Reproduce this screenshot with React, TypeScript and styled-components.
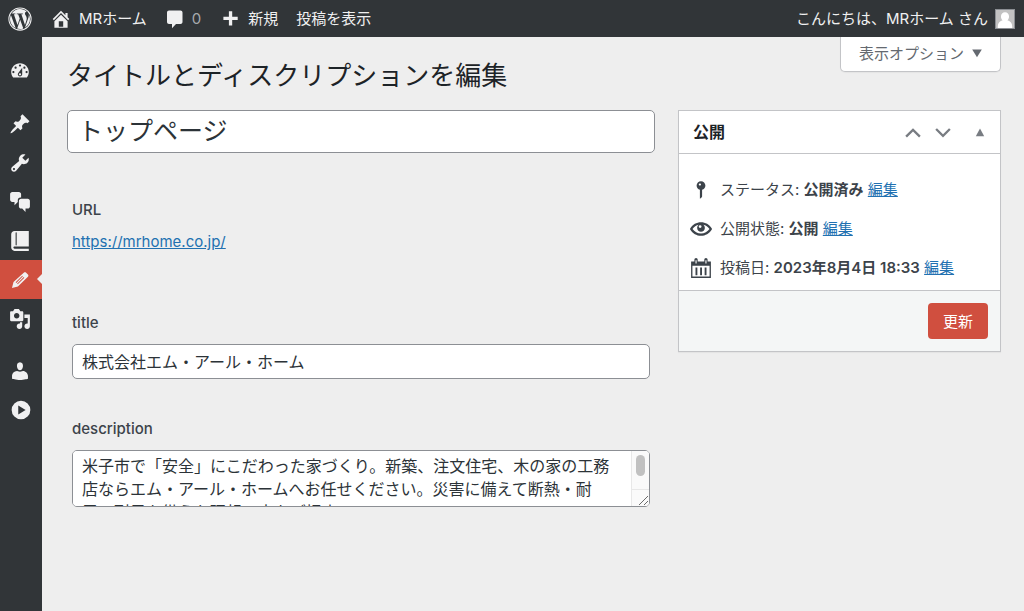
import React from "react";
import styled, { createGlobalStyle, css } from "styled-components";

const fontStack = `Inter, "Noto Sans CJK JP", sans-serif`;

const GlobalStyle = createGlobalStyle`
  *, *::before, *::after { box-sizing: border-box; }
  body {
    margin: 0;
    background: #eeeeee;
    color: #3c434a;
    font-family: ${fontStack};
    font-size: 15px;
    line-height: 20px;
  }
  h1, h2, p, ul { margin: 0; padding: 0; }
  ul { list-style: none; }
  button, input, textarea { font-family: inherit; }
`;

const Page = styled.div`
  display: flex;
  flex-direction: column;
  min-height: 100vh;
`;

const AdminBar = styled.header`
  display: flex;
  align-items: center;
  justify-content: space-between;
  height: 37px;
  padding: 0 9px 0 8px;
  background: #313538;
`;

const BarGroup = styled.nav`
  display: flex;
  align-items: center;
  gap: 18px;
`;

const BarLink = styled.a<{ $muted?: boolean }>`
  display: flex;
  align-items: center;
  gap: 7px;
  color: ${(p) => (p.$muted ? "#a7aaad" : "#f0f0f1")};
  text-decoration: none;
  white-space: nowrap;
`;

const Glyph = styled.svg<{ $size: number; $color?: string }>`
  display: block;
  flex: none;
  width: ${(p) => p.$size}px;
  height: ${(p) => p.$size}px;
  fill: ${(p) => p.$color ?? "#f0f0f1"};
  fill-rule: evenodd;
`;

const Avatar = styled(Glyph)`
  background: #c2c2c2;
  border: 1px solid #8c8f94;
`;

const Body = styled.div`
  display: flex;
  flex: 1;
`;

const SideMenu = styled.nav`
  display: flex;
  flex: none;
  flex-direction: column;
  width: 42px;
  padding-top: 14px;
  background: #313538;
`;

const MenuGroup = styled.ul`
  margin-bottom: 13px;
  &:first-child {
    margin-bottom: 14px;
  }
`;

const MenuLink = styled.a<{ $current?: boolean }>`
  position: relative;
  display: flex;
  align-items: center;
  height: 39px;
  padding-left: 9px;
  ${(p) =>
    p.$current &&
    css`
      background: #d04f3f;
      &::after {
        content: "";
        position: absolute;
        top: 14px;
        right: 0;
        border: 5px solid transparent;
        border-left-width: 0;
        border-right-color: #eeeeee;
      }
    `}
`;

const CollapseButton = styled.button`
  display: flex;
  align-items: center;
  width: 100%;
  height: 39px;
  padding: 0 0 0 10px;
  border: 0;
  background: none;
`;

const Content = styled.main`
  flex: 1;
  min-width: 0;
  padding: 0 23px 0 25px;
`;

const TopRow = styled.div`
  display: flex;
  align-items: flex-start;
  justify-content: space-between;
  height: 73px;
`;

const PageTitle = styled.h1`
  padding-top: 22px;
  color: #1d2327;
  font-size: 26px;
  font-weight: 400;
  line-height: 34px;
`;

const ScreenOptions = styled.button`
  display: flex;
  align-items: center;
  gap: 7px;
  height: 35px;
  padding: 0 17px 3px 18px;
  border: 1px solid #c3c4c7;
  border-top: 0;
  border-radius: 0 0 5px 5px;
  background: #ffffff;
  box-shadow: 0 1px 1px rgba(0, 0, 0, 0.04);
  color: #646970;
  font-size: 15px;
`;

const Columns = styled.div`
  display: grid;
  grid-template-columns: minmax(0, 1fr) 323px;
  align-items: start;
  gap: 23px;
`;

const Editor = styled.form`
  display: flex;
  flex-direction: column;
`;

const TitleInput = styled.input`
  width: 100%;
  height: 43px;
  padding: 0 10px 5px;
  border: 1px solid #8c8f94;
  border-radius: 5px;
  background: #ffffff;
  color: #2c3338;
  font-size: 25px;
`;

const Field = styled.div`
  display: flex;
  flex-direction: column;
  align-items: flex-start;
  gap: 11px;
  padding: 0 5px;
  margin-top: 40px;
`;

const UrlField = styled(Field)`
  gap: 12px;
  margin: 47px 0 21px;
`;

const FieldLabel = styled.label`
  font-weight: 500;
`;

const Link = styled.a`
  color: #2271b1;
  text-decoration: underline;
`;

const controlStyle = css`
  display: block;
  width: 100%;
  border: 1px solid #8c8f94;
  border-radius: 5px;
  background: #ffffff;
  color: #2c3338;
  font-size: 16px;
`;

const TextInput = styled.input`
  ${controlStyle}
  height: 35px;
  padding: 0 9px 2px;
`;

const TextAreaFrame = styled.div`
  position: relative;
  width: 100%;
`;

const TextArea = styled.textarea`
  ${controlStyle}
  height: 57px;
  padding: 4px 28px 0 9px;
  line-height: 23px;
  resize: none;
  scrollbar-width: none;
`;

const ScrollTrack = styled.div`
  position: absolute;
  top: 1px;
  right: 1px;
  bottom: 1px;
  display: flex;
  flex-direction: column;
  align-items: center;
  justify-content: space-between;
  width: 18px;
  padding-top: 4px;
  border-left: 1px solid #e8e8e8;
  border-radius: 0 4px 4px 0;
  background: #fafafa;
`;

const ScrollThumb = styled.div`
  width: 9px;
  height: 21px;
  border-radius: 5px;
  background: #c1c1c1;
`;

const ResizeCorner = styled.div`
  display: flex;
  align-items: flex-end;
  justify-content: flex-end;
  width: 100%;
  height: 17px;
  border-top: 1px solid #e8e8e8;
`;

const Panel = styled.section`
  border: 1px solid #c3c4c7;
  background: #ffffff;
  box-shadow: 0 1px 1px rgba(0, 0, 0, 0.04);
`;

const PanelHeader = styled.div`
  display: flex;
  align-items: center;
  justify-content: space-between;
  height: 43px;
  padding: 0 8px 0 14px;
  border-bottom: 1px solid #c3c4c7;
`;

const PanelTitle = styled.h2`
  color: #1d2327;
  font-size: 16px;
  font-weight: 600;
`;

const PanelControls = styled.div`
  display: flex;
`;

const IconButton = styled.button<{ $wide?: boolean }>`
  display: flex;
  align-items: center;
  justify-content: ${(p) => (p.$wide ? "flex-end" : "center")};
  width: ${(p) => (p.$wide ? 34 : 30)}px;
  height: 30px;
  padding: 0 ${(p) => (p.$wide ? 6 : 0)}px 0 0;
  border: 0;
  background: none;
`;

const StatusList = styled.ul`
  display: flex;
  flex-direction: column;
  gap: 19px;
  padding: 26px 11px 12px;
`;

const StatusItem = styled.li`
  display: flex;
  align-items: center;
  gap: 8px;
  height: 20px;
  white-space: nowrap;
`;

const Strong = styled.b`
  font-weight: 600;
`;

const PanelFooter = styled.div`
  display: flex;
  justify-content: flex-end;
  padding: 12px;
  border-top: 1px solid #c3c4c7;
  background: #f4f6f6;
`;

const PrimaryButton = styled.button`
  height: 36px;
  padding: 0 15px 1px;
  border: 0;
  border-radius: 4px;
  background: #d04f3f;
  color: #ffffff;
  font-size: 15px;
`;

const paths = {
  home: "M16 8.5l1.53 1.53-1.06 1.06L10 4.6l-6.47 6.49-1.06-1.06L10 2.5l4 4v-2h2v4zm-6-2.46l6 5.99V18H4v-5.97zM12 17v-5H8v5h4z",
  comment:
    "M4 1.5H15.5C16.6 1.5 17.5 2.4 17.5 3.5V13C17.5 14.1 16.6 15 15.5 15H11L7 19.300V15H4C2.9 15 2 14.1 2 13V3.5C2 2.4 2.9 1.5 4 1.5z",
  plus: "M17 8v3h-5v5H9v-5H4V8h5V3h3v5h5z",
  dashboard:
    "M3.76 16h12.48c1.1-1.37 1.76-3.11 1.76-5 0-4.42-3.58-8-8-8s-8 3.58-8 8c0 1.89.66 3.63 1.76 5zM10 4c.55 0 1 .45 1 1s-.45 1-1 1-1-.45-1-1 .45-1 1-1zM6 6c.55 0 1 .45 1 1s-.45 1-1 1-1-.45-1-1 .45-1 1-1zm8 0c.55 0 1 .45 1 1s-.45 1-1 1-1-.45-1-1 .45-1 1-1zm-5.37 5.55L12 7v6c0 1.1-.9 2-2 2s-2-.9-2-2c0-.57.24-1.08.63-1.45zM4 10c.55 0 1 .45 1 1s-.45 1-1 1-1-.45-1-1 .45-1 1-1zm12 0c.55 0 1 .45 1 1s-.45 1-1 1-1-.45-1-1 .45-1 1-1zm-5 3c0-.55-.45-1-1-1s-1 .45-1 1 .45 1 1 1 1-.45 1-1z",
  pin: "M10.44 3.02l1.82-1.82 6.36 6.35-1.83 1.82c-1.05-.68-2.48-.57-3.41.36l-.75.75c-.92.93-1.04 2.35-.35 3.41l-1.83 1.82-2.41-2.41-2.8 2.79c-.42.42-3.38 2.71-3.8 2.29s1.86-3.39 2.28-3.81l2.79-2.79L4.1 9.36l1.83-1.82c1.05.69 2.48.57 3.4-.36l.75-.75c.93-.92 1.05-2.35.36-3.41z",
  wrench:
    "M16.68 9.77c-1.34 1.34-3.3 1.67-4.95.99l-5.41 6.52c-.99.99-2.59.99-3.58 0s-.99-2.59 0-3.57l6.52-5.42c-.68-1.65-.35-3.61.99-4.95 1.28-1.28 3.12-1.62 4.72-1.06l-2.89 2.89 2.82 2.82 2.86-2.87c.53 1.58.18 3.39-1.08 4.65zM3.81 16.21c.4.39 1.04.39 1.43 0 .4-.4.4-1.04 0-1.43-.39-.4-1.03-.4-1.43 0-.39.39-.39 1.03 0 1.43z",
  chat: "M11 6h-.82C9.07 6 8 7.2 8 8.16V10l-3 3v-3H3c-1.1 0-2-.9-2-2V3c0-1.1.9-2 2-2h6c1.1 0 2 .9 2 2v3zm0 1h6c1.1 0 2 .9 2 2v5c0 1.1-.9 2-2 2h-2v3l-3-3h-1c-1.1 0-2-.9-2-2V9c0-1.1.9-2 2-2z",
  book: "M5 17h13v2H5c-1.66 0-3-1.34-3-3V4c0-1.66 1.34-3 3-3h13v14H5c-.55 0-1 .45-1 1s.45 1 1 1zm2-3.5v-11c0-.28-.22-.5-.5-.5s-.5.22-.5.5v11c0 .28.22.5.5.5s.5-.22.5-.5z",
  edit: "M13.4 3.3C14 2.7 15 2.7 15.6 3.3L17.2 4.9C17.8 5.5 17.8 6.5 17.2 7.1L8.1 15.9L2.7 17.3L4.1 11.9zM12.05 6.05L6.05 12.05L6.65 12.65L12.65 6.65zM13.35 7.35L7.35 13.35L7.95 13.95L13.95 7.95z",
  media:
    "M13 11V4c0-.55-.45-1-1-1h-1.67L9 1H5L3.67 3H2c-.55 0-1 .45-1 1v7c0 .55.45 1 1 1h10c.55 0 1-.45 1-1zM7 4.5c1.38 0 2.5 1.12 2.5 2.5S8.38 9.5 7 9.5 4.5 8.38 4.5 7 5.62 4.5 7 4.5zM14 6h5v10.5c0 1.38-1.12 2.5-2.5 2.5S14 17.88 14 16.5s1.12-2.5 2.5-2.5c.17 0 .34.02.5.05V9h-3V6zm-4 8.05V13h2v3.5c0 1.38-1.12 2.5-2.5 2.5S7 17.88 7 16.5 8.12 14 9.5 14c.17 0 .34.02.5.05z",
  user: "M10 9.25c-2.27 0-2.73-3.44-2.73-3.44C7 4.02 7.82 2 9.97 2c2.16 0 2.98 2.02 2.71 3.81 0 0-.41 3.44-2.68 3.44zM7.280 10L10 10.600L12.720 10c2.390 0 4.520 2.330 4.520 4.530v2.490s-3.650 1.130-7.240 1.130c-3.650 0-7.240-1.130-7.240-1.130v-2.490c0-2.250 1.940-4.480 4.520-4.530z",
  collapse:
    "M10 1.5a8.5 8.5 0 1 0 0 17a8.5 8.5 0 0 0 0-17zM7.5 5.8L14.2 10L7.5 14.2z",
  status:
    "M14 6c0 1.86-1.28 3.41-3 3.86V16c0 1-2 2-2 2V9.86c-1.72-.45-3-2-3-3.86 0-2.21 1.79-4 4-4s4 1.79 4 4zM8 5c0 .55.45 1 1 1s1-.45 1-1-.45-1-1-1-1 .45-1 1z",
  eye: "M19.7 9.4C17.7 6 14 3.9 10 3.9S2.3 6 .3 9.4L0 10l.3.6c2 3.4 5.7 5.5 9.7 5.5s7.7-2.1 9.7-5.5l.3-.6-.3-.6zM10 14.1c-3.1 0-6-1.6-7.7-4.1C3.6 8 5.7 6.6 8 6.1c-.9.6-1.5 1.7-1.5 2.9 0 1.9 1.6 3.5 3.5 3.5s3.5-1.6 3.5-3.5c0-1.2-.6-2.3-1.5-2.9 2.3.5 4.4 1.9 5.7 3.9-1.7 2.5-4.6 4.1-7.7 4.1zM9.2 6.5a1.3 1.3 0 1 0 0 2.6a1.3 1.3 0 0 0 0-2.6z",
  calendar:
    "M4 4V2.6C4 1.7 4.7 1 5.5 1S7 1.7 7 2.6V4H13V2.6C13 1.7 13.7 1 14.5 1S16 1.7 16 2.6V4H19V19H1V4zM5 3V6H6V3zM14 3V6H15V3zM2.2 8V17.8H17.8V8zM5 9.5H6.7V16.5H5zM9.2 9.5H10.9V16.5H9.2zM13.3 9.5H15V16.5H13.3z",
  up: "M3 13.5L10 6.5L17 13.5L15.5 15L10 9.5L4.5 15z",
  down: "M3 8L10 15L17 8L15.5 6.5L10 12L4.5 6.5z",
  triangleUp: "M10 4L17 17H3z",
  triangleDown: "M10 17L18 4H2z",
  avatar:
    "M10 2.5c2.6 0 4.5 1.9 4.5 4.7 0 1.8-.8 3.4-1.9 4.3 2.9.9 5.4 3.2 5.4 6.5v2H2v-2c0-3.3 2.5-5.6 5.4-6.5-1.1-.9-1.9-2.5-1.9-4.3 0-2.8 1.9-4.7 4.5-4.7z",
};

type IconName = keyof typeof paths;

const Icon = ({ name, size = 22, color }: { name: IconName; size?: number; color?: string }) => (
  <Glyph viewBox="0 0 20 20" $size={size} $color={color} aria-hidden="true">
    <path d={paths[name]} />
  </Glyph>
);

const WordPressLogo = () => (
  <Glyph viewBox="0 0 512 512" $size={24} aria-hidden="true">
    <circle cx="256" cy="256" r="237" fill="none" stroke="#f0f0f1" strokeWidth="22" />
    <path d="M61.7 169.4l101.5 278C92.2 413 43.3 340.2 43.3 256c0-30.9 6.6-60.1 18.4-86.6zm337.9 75.9c0-26.3-9.4-44.5-17.5-58.7-10.8-17.5-20.9-32.4-20.9-49.9 0-19.6 14.8-37.8 35.7-37.8.9 0 1.8.1 2.8.2-37.9-34.7-88.3-55.9-143.7-55.9-74.3 0-139.7 38.1-177.8 95.9 5 .2 9.7.3 13.7.3 22.2 0 56.7-2.7 56.7-2.7 11.5-.7 12.8 16.2 1.4 17.5 0 0-11.5 1.3-24.3 2l77.5 230.4L249.8 247l-33.1-90.8c-11.5-.7-22.3-2-22.3-2-11.5-.7-10.1-18.2 1.3-17.5 0 0 35.1 2.7 56 2.7 22.2 0 56.7-2.7 56.7-2.7 11.5-.7 12.8 16.2 1.4 17.5 0 0-11.5 1.3-24.3 2l76.9 228.7 21.2-70.9c9-29.4 16-50.5 16-68.7zm-139.9 29.3l-63.8 185.5c19.1 5.6 39.2 8.7 60.1 8.7 24.8 0 48.5-4.3 70.6-12.1-.6-.9-1.1-1.9-1.5-2.9l-65.4-179.2zm183-120.7c.9 6.8 1.4 14 1.4 21.9 0 21.6-4 45.8-16.2 76.2l-65 187.9C426.2 403 468.7 334.5 468.7 256c0-37-9.4-71.7-26-102.1z" />
  </Glyph>
);

const menuGroups: { label: string; icon: IconName; current?: boolean }[][] = [
  [{ label: "ダッシュボード", icon: "dashboard" }],
  [
    { label: "投稿", icon: "pin" },
    { label: "ツール", icon: "wrench" },
    { label: "コメント", icon: "chat" },
    { label: "ブック", icon: "book" },
    { label: "編集", icon: "edit", current: true },
    { label: "メディア", icon: "media" },
  ],
];

const statuses: { icon: IconName; label: string; value: string }[] = [
  { icon: "status", label: "ステータス", value: "公開済み" },
  { icon: "eye", label: "公開状態", value: "公開" },
  { icon: "calendar", label: "投稿日", value: "2023年8月4日 18:33" },
];

const description =
  "米子市で「安全」にこだわった家づくり。新築、注文住宅、木の家の工務店ならエム・アール・ホームへお任せください。災害に備えて断熱・耐震・耐風を備えた理想の家をご提案";

export default function App() {
  return (
    <Page>
      <GlobalStyle />
      <AdminBar>
        <BarGroup>
          <BarLink href="#" aria-label="WordPress">
            <WordPressLogo />
          </BarLink>
          <BarLink href="#">
            <Icon name="home" />
            MRホーム
          </BarLink>
          <BarLink href="#" $muted>
            <Icon name="comment" size={20} />
            <span>0</span>
          </BarLink>
          <BarLink href="#">
            <Icon name="plus" />
            新規
          </BarLink>
          <BarLink href="#">投稿を表示</BarLink>
        </BarGroup>
        <BarLink href="#">
          こんにちは、MRホーム さん
          <Avatar viewBox="0 0 20 20" $size={20} $color="#ffffff" aria-hidden="true">
            <path d={paths.avatar} />
          </Avatar>
        </BarLink>
      </AdminBar>
      <Body>
        <SideMenu>
          {menuGroups.map((group, i) => (
            <MenuGroup key={i}>
              {group.map((item) => (
                <li key={item.icon}>
                  <MenuLink href="#" aria-label={item.label} $current={item.current}>
                    <Icon name={item.icon} />
                  </MenuLink>
                </li>
              ))}
            </MenuGroup>
          ))}
          <MenuLink href="#" aria-label="ユーザー">
            <Icon name="user" />
          </MenuLink>
          <CollapseButton aria-label="メニューを閉じる">
            <Icon name="collapse" />
          </CollapseButton>
        </SideMenu>
        <Content>
          <TopRow>
            <PageTitle>タイトルとディスクリプションを編集</PageTitle>
            <ScreenOptions>
              表示オプション
              <Icon name="triangleDown" size={12} color="#646970" />
            </ScreenOptions>
          </TopRow>
          <Columns>
            <Editor>
              <TitleInput aria-label="タイトル" defaultValue="トップページ" />
              <UrlField>
                <FieldLabel as="span">URL</FieldLabel>
                <Link href="#">https://mrhome.co.jp/</Link>
              </UrlField>
              <Field>
                <FieldLabel htmlFor="title">title</FieldLabel>
                <TextInput id="title" defaultValue="株式会社エム・アール・ホーム" />
              </Field>
              <Field>
                <FieldLabel htmlFor="description">description</FieldLabel>
                <TextAreaFrame>
                  <TextArea id="description" defaultValue={description} />
                  <ScrollTrack aria-hidden="true">
                    <ScrollThumb />
                    <ResizeCorner>
                      <svg width="11" height="11" viewBox="0 0 11 11" stroke="#6b6b6b">
                        <path d="M1 10L10 1M6 10L10 6" />
                      </svg>
                    </ResizeCorner>
                  </ScrollTrack>
                </TextAreaFrame>
              </Field>
            </Editor>
            <Panel>
              <PanelHeader>
                <PanelTitle>公開</PanelTitle>
                <PanelControls>
                  <IconButton aria-label="上に移動">
                    <Icon name="up" color="#787c82" />
                  </IconButton>
                  <IconButton aria-label="下に移動">
                    <Icon name="down" color="#787c82" />
                  </IconButton>
                  <IconButton aria-label="パネルを閉じる" $wide>
                    <Icon name="triangleUp" size={12} color="#787c82" />
                  </IconButton>
                </PanelControls>
              </PanelHeader>
              <StatusList>
                {statuses.map((s) => (
                  <StatusItem key={s.label}>
                    <Icon name={s.icon} color="#3c434a" />
                    <span>
                      {s.label}: <Strong>{s.value}</Strong> <Link href="#">編集</Link>
                    </span>
                  </StatusItem>
                ))}
              </StatusList>
              <PanelFooter>
                <PrimaryButton>更新</PrimaryButton>
              </PanelFooter>
            </Panel>
          </Columns>
        </Content>
      </Body>
    </Page>
  );
}
